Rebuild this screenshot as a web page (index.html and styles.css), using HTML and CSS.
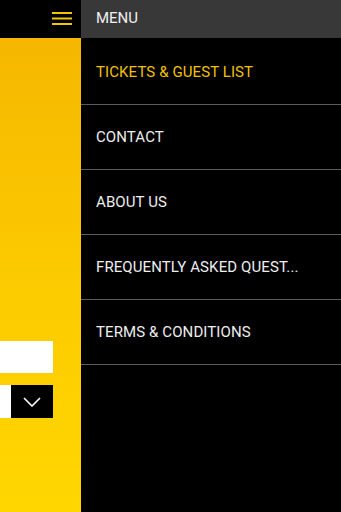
FILE: index.html
```html
<!DOCTYPE html>
<html>
<head>
<meta charset="utf-8">
<link rel="stylesheet" href="styles.css">
</head>
<body>
<div class="screen">
  <div class="page">
    <div class="topbar">
      <svg class="burger" width="20" height="16" viewBox="0 0 20 16">
        <rect x="0" y="2" width="20" height="2" fill="#f5c400"/>
        <rect x="0" y="7.5" width="20" height="2" fill="#f5c400"/>
        <rect x="0" y="13" width="20" height="2" fill="#f5c400"/>
      </svg>
    </div>
    <div class="body">
      <div class="input"></div>
      <div class="select">
        <div class="select-field"></div>
        <div class="select-btn">
          <svg width="18" height="10" viewBox="0 0 18 10">
            <polyline points="1,1 9,9 17,1" fill="none" stroke="#fff" stroke-width="1.6"/>
          </svg>
        </div>
      </div>
    </div>
  </div>
  <div class="drawer">
    <div class="drawer-head">MENU</div>
    <ul class="menu">
      <li class="item active">TICKETS &amp; GUEST LIST</li>
      <li class="item">CONTACT</li>
      <li class="item">ABOUT US</li>
      <li class="item">FREQUENTLY ASKED QUEST...</li>
      <li class="item">TERMS &amp; CONDITIONS</li>
    </ul>
  </div>
</div>
</body>
</html>
```
FILE: styles.css
```css
html, body {
  margin: 0;
  padding: 0;
  background: #000;
}
.screen {
  width: 341px;
  height: 512px;
  display: flex;
  overflow: hidden;
  font-family: Roboto, "Liberation Sans", sans-serif;
}
.page {
  width: 81px;
  display: flex;
  flex-direction: column;
}
.topbar {
  height: 38px;
  background: #000;
  display: flex;
  justify-content: flex-end;
  align-items: center;
  padding-right: 9px;
}
.burger {
  display: block;
  margin-top: -2px;
}
.body {
  flex: 1;
  background: linear-gradient(to bottom, #f5b700 0%, #fcca00 50%, #ffd600 100%);
  padding-top: 303px;
}
.input {
  width: 53px;
  height: 32px;
  background: #fff;
}
.select {
  margin-top: 12px;
  display: flex;
  height: 33px;
  width: 53px;
}
.select-field {
  width: 11px;
  background: #fff;
}
.select-btn {
  flex: 1;
  background: #000;
  display: flex;
  align-items: center;
  justify-content: center;
}
.select-btn svg {
  display: block;
}
.drawer {
  flex: 1;
  background: #000;
  display: flex;
  flex-direction: column;
}
.drawer-head {
  height: 38px;
  background: #383838;
  color: #f0f0f0;
  font-size: 15px;
  display: flex;
  align-items: center;
  padding-left: 15px;
  padding-bottom: 2px;
  box-sizing: border-box;
}
.menu {
  list-style: none;
  margin: 0;
  padding: 2px 0 0;
}
.item {
  height: 64px;
  border-bottom: 1px solid #5c5c5c;
  color: #eeeeee;
  font-size: 15px;
  letter-spacing: 0.1px;
  display: flex;
  align-items: center;
  padding-left: 15px;
  white-space: nowrap;
}
.item.active {
  color: #f2c200;
}
```
